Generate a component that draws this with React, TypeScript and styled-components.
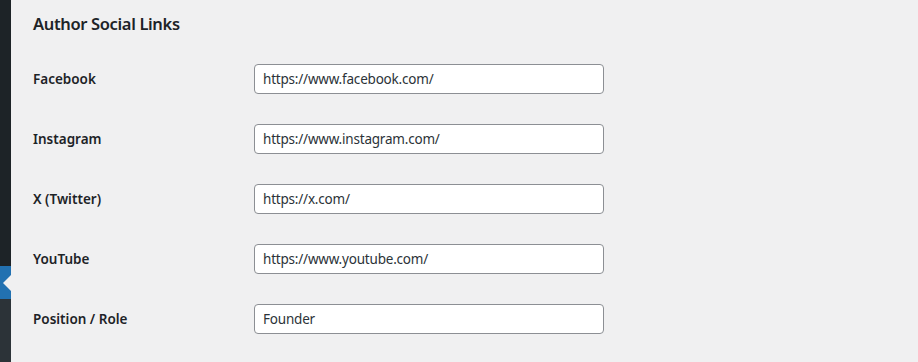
import styled, {createGlobalStyle} from 'styled-components'
import {FunctionComponent} from 'react'

const GlobalStyle = createGlobalStyle`
  html, body {
    margin: 0;
    padding: 0;
    background: #f0f0f1;
  }
  body {
    font-family: "Noto Sans", "Open Sans", sans-serif;
    color: #1d2327;
    font-size: 14px;
  }
`

const Page = styled.div`
  display: flex;
  flex-direction: row;
  width: 918px;
  height: 362px;
  overflow: hidden;
  background: #f0f0f1;
`

const Sidebar = styled.div`
  width: 11px;
  flex-shrink: 0;
  display: flex;
  flex-direction: column;
  background: #1d2327;
`

const SideTop = styled.div`
  height: 266px;
`

const SideCurrent = styled.div`
  position: relative;
  height: 33px;
  background: #2271b1;

  &::after {
    content: '';
    position: absolute;
    right: 0;
    top: 50%;
    margin-top: -8px;
    border: 8px solid transparent;
    border-right-color: #f0f0f1;
    border-left-width: 0;
    width: 0;
    height: 0;
  }
`

const SideSub = styled.div`
  flex: 1;
  background: #2c3338;
`

const Content = styled.div`
  flex: 1;
  padding: 0 0 0 22px;
`

const Title = styled.h2`
  margin: 12px 0 0;
  font-size: 16.5px;
  font-weight: 600;
  letter-spacing: -0.35px;
  line-height: 24px;
`

const Table = styled.div`
  display: flex;
  flex-direction: column;
  margin-top: 13px;
`

const Row = styled.div`
  display: flex;
  flex-direction: row;
  align-items: center;
  height: 60px;
`

const Label = styled.label`
  width: 221px;
  font-size: 13.5px;
  font-weight: 600;
`

const Input = styled.input`
  box-sizing: border-box;
  width: 350px;
  height: 30px;
  padding: 0 8px;
  border: 1px solid #8c8f94;
  border-radius: 4px;
  background: #fff;
  font-family: "Noto Sans", "Open Sans", sans-serif;
  font-size: 13.5px;
  letter-spacing: -0.2px;
  color: #2c3338;
  outline: none;
`

interface FieldProps {
    label: string
    value: string
}

const Field: FunctionComponent<FieldProps> = ({label, value}) => (
    <Row>
        <Label>{label}</Label>
        <Input type="text" defaultValue={value}/>
    </Row>
)

const fields: FieldProps[] = [
    {label: 'Facebook', value: 'https://www.facebook.com/'},
    {label: 'Instagram', value: 'https://www.instagram.com/'},
    {label: 'X (Twitter)', value: 'https://x.com/'},
    {label: 'YouTube', value: 'https://www.youtube.com/'},
    {label: 'Position / Role', value: 'Founder'},
]

const App = () => (
    <>
        <GlobalStyle/>
        <Page>
            <Sidebar>
                <SideTop/>
                <SideCurrent/>
                <SideSub/>
            </Sidebar>
            <Content>
                <Title>Author Social Links</Title>
                <Table>
                    {fields.map(f => <Field key={f.label} {...f}/>)}
                </Table>
            </Content>
        </Page>
    </>
)

export default App
